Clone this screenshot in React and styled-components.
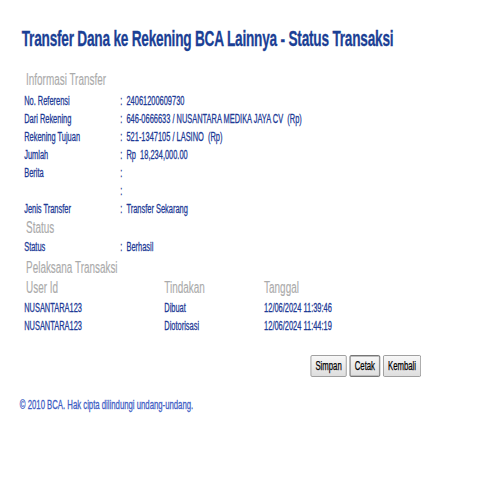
import React from 'react'
import styled, { createGlobalStyle } from 'styled-components'

const SCALE = 0.62

const GlobalStyle = createGlobalStyle`
  html, body {
    margin: 0;
    padding: 0;
    background: #ffffff;
    overflow: hidden;
  }
  body {
    font-family: 'Liberation Sans', Arial, sans-serif;
  }
`

// the reference is squeezed sideways, so the page is laid out wide and scaled
const Page = styled.div`
  width: 806px;
  padding-top: 26px;
  transform: scaleX(${SCALE});
  transform-origin: 0 0;
`

const Title = styled.h1`
  margin: 0 0 18px 35px;
  font-size: 22px;
  line-height: 26px;
  font-weight: bold;
  letter-spacing: -0.35px;
  color: #1b3f95;
  -webkit-text-stroke: 0.3px #1b3f95;
`

const Content = styled.div`
  padding-left: 39px;
`

const SectionHead = styled.div`
  font-size: 16px;
  line-height: 20px;
  padding-left: 3px;
  color: #ababab;
  -webkit-text-stroke: 0.15px #ababab;
  margin-top: ${(p) => p.top || 0}px;
  margin-bottom: ${(p) => p.bottom || 0}px;
`

const Row = styled.div`
  display: grid;
  grid-template-columns: 155px 10px 1fr;
  font-size: 12px;
  line-height: 18px;
  color: #1d3a96;
  -webkit-text-stroke: 0.3px #1d3a96;
  white-space: pre;
`

const LogTable = styled.div`
  display: grid;
  grid-template-columns: 226px 161px 1fr;
  font-size: ${(p) => (p.head ? 16 : 12)}px;
  line-height: ${(p) => (p.head ? 20 : 18)}px;
  color: ${(p) => (p.head ? '#ababab' : '#1d3a96')};
  -webkit-text-stroke: ${(p) => (p.head ? '0.15px #ababab' : '0.3px #1d3a96')};
  margin-bottom: ${(p) => (p.head ? 1 : 0)}px;
  span:first-child {
    padding-left: ${(p) => (p.head ? 3 : 0)}px;
  }
`

const ButtonBar = styled.div`
  width: 640px;
  display: flex;
  justify-content: flex-end;
  gap: 5px;
  margin-top: 20px;
`

const Button = styled.button`
  height: 22px;
  padding: 0 7px;
  font-family: 'Liberation Sans', Arial, sans-serif;
  font-size: 12.5px;
  color: #000;
  -webkit-text-stroke: 0.25px #000;
  background: linear-gradient(#f7f7f7, #dedede);
  border: 1px solid ${(p) => (p.active ? '#555' : '#8a8a8a')};
  border-radius: 2px;
  box-shadow: ${(p) => (p.active ? 'inset 0 0 0 1px #bdbdbd' : 'none')};
`

const Footer = styled.div`
  margin: 19px 0 0 32px;
  font-size: 12.5px;
  line-height: 18px;
  color: #3d5cc4;
  -webkit-text-stroke: 0.3px #3d5cc4;
`

const info = [
  ['No. Referensi', ':', '24061200609730'],
  ['Dari Rekening', ':', '646-0666633 / NUSANTARA MEDIKA JAYA CV  (Rp)'],
  ['Rekening Tujuan', ':', '521-1347105 / LASINO  (Rp)'],
  ['Jumlah', ':', 'Rp  18,234,000.00'],
  ['Berita', ':', ''],
  ['', ':', ''],
  ['Jenis Transfer', ':', 'Transfer Sekarang'],
]

const logs = [
  ['NUSANTARA123', 'Dibuat', '12/06/2024 11:39:46'],
  ['NUSANTARA123', 'Diotorisasi', '12/06/2024 11:44:19'],
]

const App = () => {
  return (
    <>
      <GlobalStyle />
      <Page>
        <Title>Transfer Dana ke Rekening BCA Lainnya - Status Transaksi</Title>
        <Content>
          <SectionHead bottom={2}>Informasi Transfer</SectionHead>
          {info.map(([label, sep, value], i) => (
            <Row key={i}>
              <span>{label}</span>
              <span>{sep}</span>
              <span>{value}</span>
            </Row>
          ))}
          <SectionHead>Status</SectionHead>
          <Row>
            <span>Status</span>
            <span>:</span>
            <span>Berhasil</span>
          </Row>
          <SectionHead top={2}>Pelaksana Transaksi</SectionHead>
          <LogTable head>
            <span>User Id</span>
            <span>Tindakan</span>
            <span>Tanggal</span>
          </LogTable>
          {logs.map((row, i) => (
            <LogTable key={i}>
              {row.map((cell, j) => (
                <span key={j}>{cell}</span>
              ))}
            </LogTable>
          ))}
          <ButtonBar>
            <Button>Simpan</Button>
            <Button active>Cetak</Button>
            <Button>Kembali</Button>
          </ButtonBar>
        </Content>
        <Footer>©  2010 BCA. Hak cipta dilindungi undang-undang.</Footer>
      </Page>
    </>
  )
}

export default App
